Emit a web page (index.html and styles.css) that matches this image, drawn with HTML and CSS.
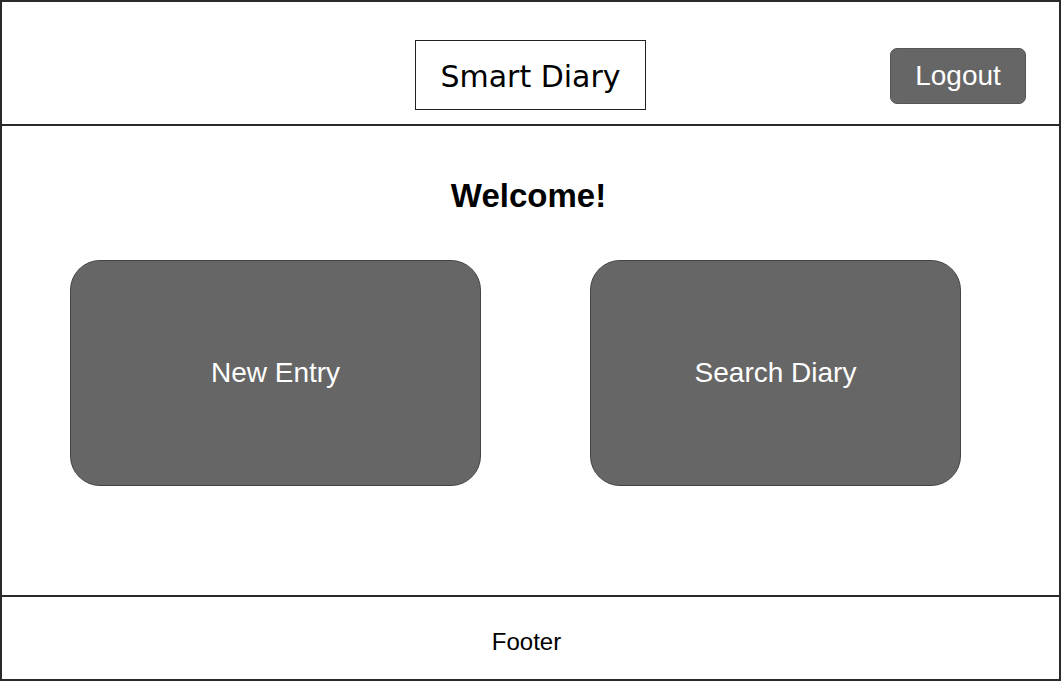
FILE: index.html
```html
<!DOCTYPE html>
<html>
<head>
<meta charset="utf-8">
<link rel="stylesheet" href="styles.css">
</head>
<body>
<div class="page">
  <header class="header">
    <div class="spacer"></div>
    <div class="title">Smart Diary</div>
    <div class="actions"><button class="logout">Logout</button></div>
  </header>
  <main class="main">
    <h1 class="welcome">Welcome!</h1>
    <div class="cards">
      <div class="card card-new">New Entry</div>
      <div class="card card-search">Search Diary</div>
    </div>
  </main>
  <footer class="footer">Footer</footer>
</div>
</body>
</html>
```

FILE: styles.css
```css
html, body {
  margin: 0;
  padding: 0;
  background: #fff;
}
.page {
  width: 1061px;
  height: 681px;
  box-sizing: border-box;
  border: 2px solid #2a2a2a;
  display: flex;
  flex-direction: column;
  font-family: "Liberation Sans", Arial, sans-serif;
  color: #000;
}
.header {
  height: 124px;
  box-sizing: border-box;
  border-bottom: 2px solid #2a2a2a;
  display: grid;
  grid-template-columns: 1fr auto 1fr;
  align-items: start;
  padding-top: 38px;
}
.title {
  font-family: "DejaVu Sans", sans-serif;
  font-size: 30px;
  line-height: 36px;
  box-sizing: border-box;
  width: 231px;
  height: 70px;
  border: 1.5px solid #222;
  display: flex;
  align-items: center;
  justify-content: center;
  padding-top: 4px;
}
.actions {
  display: flex;
  justify-content: flex-end;
  padding-right: 33px;
  padding-top: 8px;
}
.logout {
  width: 136px;
  height: 56px;
  background: #666;
  border: 1px solid #555;
  border-radius: 7px;
  color: #fff;
  font-family: "Liberation Sans", Arial, sans-serif;
  font-size: 28px;
  padding: 0;
}
.main {
  height: 469px;
  box-sizing: border-box;
  display: flex;
  flex-direction: column;
}
.welcome {
  margin: 0;
  padding-top: 51px;
  font-size: 33px;
  line-height: 38px;
  font-weight: bold;
  text-align: center;
  margin-left: -4px;
}
.cards {
  display: flex;
  gap: 109px;
  padding-left: 68px;
  margin-top: 45px;
}
.card {
  height: 226px;
  box-sizing: border-box;
  background: #666;
  border: 1px solid #444;
  border-radius: 30px;
  color: #fff;
  font-size: 28px;
  display: flex;
  align-items: center;
  justify-content: center;
}
.card-new { width: 411px; }
.card-search { width: 371px; }
.footer {
  flex: 1;
  border-top: 2px solid #2a2a2a;
  display: flex;
  align-items: center;
  justify-content: center;
  font-size: 24px;
  padding-top: 8px;
  padding-right: 8px;
}
```
